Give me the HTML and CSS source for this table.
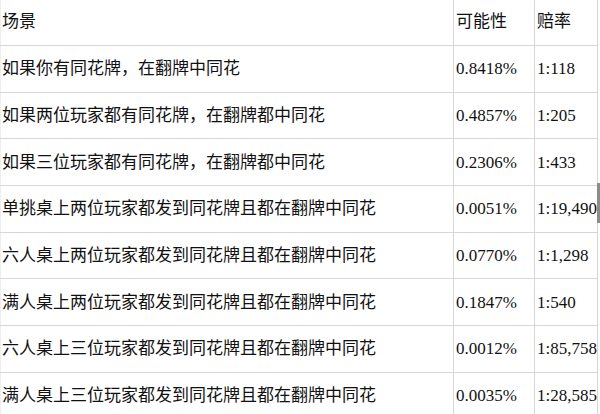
FILE: index.html
```html
<!DOCTYPE html>
<html lang="zh">
<head>
<meta charset="utf-8">
<link rel="stylesheet" href="styles.css">
</head>
<body>
<div class="wrap">
<table class="odds">
  <colgroup>
    <col class="c-scene">
    <col class="c-prob">
    <col class="c-ratio">
  </colgroup>
  <thead>
    <tr class="head"><th>场景</th><th>可能性</th><th>赔率</th></tr>
  </thead>
  <tbody>
    <tr><td>如果你有同花牌，在翻牌中同花</td><td>0.8418%</td><td>1:118</td></tr>
    <tr><td>如果两位玩家都有同花牌，在翻牌都中同花</td><td>0.4857%</td><td>1:205</td></tr>
    <tr><td>如果三位玩家都有同花牌，在翻牌都中同花</td><td>0.2306%</td><td>1:433</td></tr>
    <tr><td>单挑桌上两位玩家都发到同花牌且都在翻牌中同花</td><td>0.0051%</td><td>1:19,490</td></tr>
    <tr><td>六人桌上两位玩家都发到同花牌且都在翻牌中同花</td><td>0.0770%</td><td>1:1,298</td></tr>
    <tr><td>满人桌上两位玩家都发到同花牌且都在翻牌中同花</td><td>0.1847%</td><td>1:540</td></tr>
    <tr><td>六人桌上三位玩家都发到同花牌且都在翻牌中同花</td><td>0.0012%</td><td>1:85,758</td></tr>
    <tr><td>满人桌上三位玩家都发到同花牌且都在翻牌中同花</td><td>0.0035%</td><td>1:28,585</td></tr>
  </tbody>
</table>
<div class="thumb"></div>
</div>
</body>
</html>
```
FILE: styles.css
```css
html, body {
  margin: 0;
  padding: 0;
  background: #ffffff;
}
.wrap {
  position: relative;
  width: 600px;
  height: 414px;
  overflow: hidden;
}
.odds {
  border-collapse: collapse;
  table-layout: fixed;
  width: 597px;
  font-family: "Liberation Serif", "Noto Sans CJK SC", serif;
  font-size: 17px;
  color: #111111;
}
.c-scene { width: 453px; }
.c-prob { width: 81px; }
.c-ratio { width: 63px; }
.odds th, .odds td {
  font-weight: normal;
  text-align: left;
  white-space: nowrap;
  overflow: visible;
  padding: 0 0 0 2px;
  border-left: 1px solid #d6d6d6;
  border-right: 1px solid #d6d6d6;
  border-bottom: 1px solid #d6d6d6;
  vertical-align: middle;
  line-height: 20px;
}
.odds th:first-child, .odds td:first-child {
  border-left: 1px solid #eeeeee;
  padding-left: 1px;
}
.head th {
  height: 44px;
  padding-bottom: 1px;
}
.odds tbody td {
  height: 44.7px;
  padding-top: 1px;
}
.thumb {
  position: absolute;
  left: 597px;
  top: 183px;
  width: 3px;
  height: 40px;
  background: #8c8c8c;
}
```
